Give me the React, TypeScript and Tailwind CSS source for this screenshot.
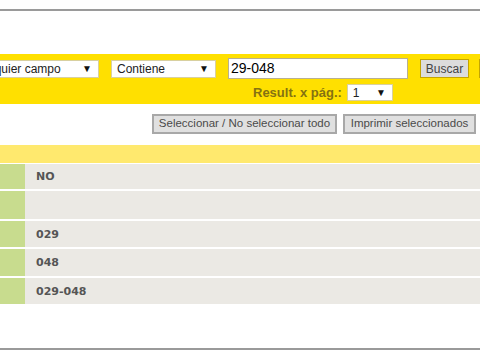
const rows = [
  { label: 'NO', h: 'h-[25px]' },
  { label: '', h: 'h-[28px]' },
  { label: '029', h: 'h-[26px]' },
  { label: '048', h: 'h-[27px]' },
  { label: '029-048', h: 'h-[26px]' },
]

function FakeSelect({ value, className }: { value: string; className: string }) {
  return (
    <div className={`shrink-0 flex items-center justify-between bg-white border border-[#d8d0a0] pl-[5px] pr-[6px] text-[12px] text-[#222] leading-none ${className}`}>
      <span className="whitespace-nowrap">{value}</span>
      <span className="text-[10px] text-[#111]">▼</span>
    </div>
  )
}

export default function App() {
  return (
    <div className="w-[480px] h-[360px] bg-white overflow-hidden font-['Liberation_Sans',Arial,sans-serif]">
      <div className="h-[9px]" />
      <div className="h-[2px] bg-[#9a9a9a]" />
      <div className="h-[43px]" />

      <div className="h-[50px] bg-[#ffe000] pt-[4px]">
        <div className="flex items-center h-[21px] w-[600px]">
          <FakeSelect value="Cualquier campo" className="ml-[-36px] w-[135px] h-[18px]" />
          <FakeSelect value="Contiene" className="ml-[12px] w-[105px] h-[18px]" />
          <div className="shrink-0 ml-[12px] w-[180px] h-[21px] bg-white border border-[#b8b090] pl-[2px] flex items-center text-[14px] text-black">
            29-048
          </div>
          <button className="shrink-0 ml-[12px] w-[49px] h-[19px] bg-[#dcdcdc] border border-[#c4a500] text-[12px] text-[#444] leading-none">
            Buscar
          </button>
          <button className="shrink-0 ml-[10px] w-[40px] h-[19px] bg-[#dcdcdc] border border-[#c4a500]" />
        </div>
        <div className="flex items-center mt-[5px] h-[17px]">
          <span className="ml-[253px] text-[13px] font-bold text-[#857212] whitespace-nowrap">Result. x pág.:</span>
          <FakeSelect value="1" className="ml-[5px] w-[46px] h-[17px]" />
        </div>
      </div>

      <div className="flex items-center h-[41px] pb-[1px]">
        <button className="ml-[152px] w-[185px] h-[20px] bg-[#e0e0e0] border-2 border-[#a8a8a8] text-[11.5px] text-[#4a4a4a] leading-none whitespace-nowrap">
          Seleccionar / No seleccionar todo
        </button>
        <button className="ml-[6px] w-[133px] h-[20px] bg-[#e0e0e0] border-2 border-[#a8a8a8] text-[11.5px] text-[#4a4a4a] leading-none whitespace-nowrap">
          Imprimir seleccionados
        </button>
      </div>

      <div className="h-[18px] bg-[#ffe96e]" />

      <div className="flex flex-col gap-[2px] pt-[1px]">
        {rows.map((r, i) => (
          <div key={i} className={`flex ${r.h}`}>
            <div className="w-[25px] bg-[#c8dc8e]" />
            <div className="flex-1 bg-[#ebe9e4] flex items-center pl-[11px] pt-[2px] font-['DejaVu_Sans',Verdana,sans-serif] font-bold text-[11px] text-[#555]">
              {r.label}
            </div>
          </div>
        ))}
      </div>

      <div className="h-[44px]" />
      <div className="h-[2px] bg-[#9a9a9a]" />
    </div>
  )
}
